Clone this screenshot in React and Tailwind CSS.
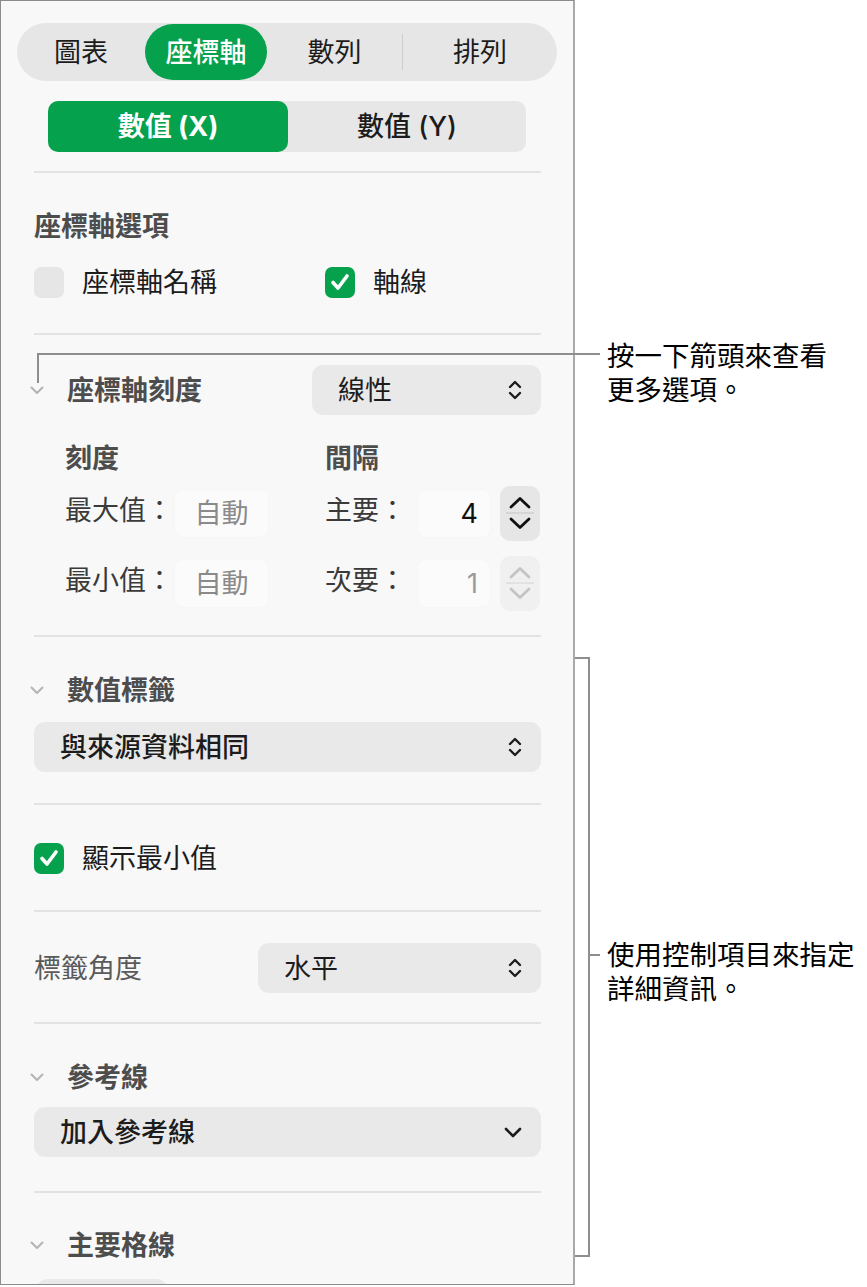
import React from "react";

const UpDown = ({ className = "" }) => (
  <svg width="14" height="22" viewBox="0 0 14 22" fill="none" stroke="currentColor" strokeWidth="2.4" strokeLinecap="round" strokeLinejoin="round" className={className}>
    <path d="M2 8 L7 3 L12 8" />
    <path d="M2 14 L7 19 L12 14" />
  </svg>
);

const ChevronDown = ({ className = "" }) => (
  <svg width="18" height="11" viewBox="0 0 18 11" fill="none" stroke="currentColor" strokeWidth="2.6" strokeLinecap="round" strokeLinejoin="round" className={className}>
    <path d="M2 2 L9 9 L16 2" />
  </svg>
);

const Disclosure = () => (
  <svg width="14" height="9" viewBox="0 0 14 9" fill="none" stroke="#b4b4b4" strokeWidth="2" strokeLinecap="round" strokeLinejoin="round" className="-ml-[4px] shrink-0">
    <path d="M1.5 1.5 L7 7 L12.5 1.5" />
  </svg>
);

const Checkbox = ({ checked }) =>
  checked ? (
    <div className="w-[30px] h-[31px] rounded-[7px] bg-[#06a14c] flex items-center justify-center shrink-0">
      <svg width="20" height="18" viewBox="0 0 20 18" fill="none" stroke="white" strokeWidth="3.6" strokeLinecap="round" strokeLinejoin="round">
        <path d="M3 9.5 L8 15 L17 3" />
      </svg>
    </div>
  ) : (
    <div className="w-[30px] h-[31px] rounded-[7px] bg-[#e6e6e6] shrink-0" />
  );

const Select = ({ label, width, down, bold }) => (
  <div className={`${width} h-[50px] rounded-[11px] bg-[#e9e9e9] flex items-center justify-between pl-[26px] pr-[19px]`}>
    <span className={`text-[27px] text-[#1c1c1c] ${bold ? "font-medium" : ""}`}>{label}</span>
    {down ? <ChevronDown className="text-[#1c1c1c]" /> : <UpDown className="text-[#1c1c1c]" />}
  </div>
);

const Stepper = ({ disabled }) => (
  <div className={`w-[40px] h-[55px] rounded-[10px] flex flex-col items-center justify-center ${disabled ? "bg-[#f0f0f0] text-[#c4c4c4]" : "bg-[#e6e6e6] text-[#111]"}`}>
    <svg width="24" height="13" viewBox="0 0 24 13" fill="none" stroke="currentColor" strokeWidth="2.8" strokeLinecap="round" strokeLinejoin="round">
      <path d="M3 11 L12 2.5 L21 11" />
    </svg>
    <div className={`w-[28px] h-[2px] my-[3px] ${disabled ? "bg-[#e2e2e2]" : "bg-[#d6d6d6]"}`} />
    <svg width="24" height="13" viewBox="0 0 24 13" fill="none" stroke="currentColor" strokeWidth="2.8" strokeLinecap="round" strokeLinejoin="round">
      <path d="M3 2 L12 10.5 L21 2" />
    </svg>
  </div>
);

const Sep = ({ mt }) => <div className={`${mt} h-[2px] bg-[#e3e3e3] shrink-0`} />;

const SectionHead = ({ label, mt }) => (
  <div className={`${mt} h-[32px] flex items-center shrink-0`}>
    <Disclosure />
    <span className="ml-[23px] text-[27px] font-bold text-[#4d4d4d]">{label}</span>
  </div>
);

const Field = ({ children, tone, align }) => (
  <div className={`h-[47px] rounded-[8px] bg-[#fbfbfb] shadow-[0_0_2px_rgba(0,0,0,0.035)] flex items-center ${align} ${tone}`}>{children}</div>
);

export default function App() {
  return (
    <div className="relative w-[867px] h-[1287px] bg-white flex [font-family:Inter,'Noto_Sans_CJK_TC',sans-serif] leading-none">
      {/* inspector panel */}
      <div className="w-[575px] h-[1285px] shrink-0 border-l border-t border-b border-[#8c8c8c] border-r-2 border-r-[#a9a9a9] bg-[#f8f8f8] overflow-hidden flex flex-col">
        {/* tabs */}
        <div className="mt-[22px] ml-[16px] w-[540px] h-[58px] rounded-full bg-[#e6e6e6] flex items-center shrink-0 text-[27px] text-[#1c1c1c]">
          <div className="w-[128px] text-center">圖表</div>
          <div className="w-[122px] h-[56px] rounded-full bg-[#06a14c] text-white font-medium flex items-center justify-center">座標軸</div>
          <div className="w-[135px] text-center">數列</div>
          <div className="w-px h-[36px] bg-[#cdcdcd]" />
          <div className="flex-1 text-center">排列</div>
        </div>

        {/* axis switch */}
        <div className="mt-[20px] ml-[47px] w-[478px] h-[51px] rounded-[10px] bg-[#e7e7e7] flex shrink-0 text-[27px]">
          <div className="w-[240px] rounded-[10px] bg-[#06a14c] text-white font-bold flex items-center justify-center">數值 (X)</div>
          <div className="flex-1 text-[#1c1c1c] font-medium flex items-center justify-center">數值 (Y)</div>
        </div>

        <div className="flex flex-col pl-[33px] pr-[32px]">
          <Sep mt="mt-[19px]" />

          <div className="mt-[37px] h-[32px] flex items-center text-[27px] font-bold text-[#4d4d4d]">座標軸選項</div>

          <div className="mt-[24px] h-[32px] flex items-center text-[27px] text-[#1c1c1c]">
            <Checkbox />
            <span className="ml-[18px] w-[243px]">座標軸名稱</span>
            <Checkbox checked />
            <span className="ml-[18px]">軸線</span>
          </div>

          <Sep mt="mt-[35px]" />

          <div className="mt-[30px] h-[50px] flex items-center">
            <Disclosure />
            <span className="ml-[23px] text-[27px] font-bold text-[#4d4d4d]">座標軸刻度</span>
            <div className="ml-auto">
              <Select label="線性" width="w-[229px]" />
            </div>
          </div>

          {/* scale grid */}
          <div className="pl-[31px] flex flex-col text-[27px]">
            <div className="mt-[27px] h-[32px] flex items-center font-bold text-[#4d4d4d]">
              <span className="w-[260px]">刻度</span>
              <span>間隔</span>
            </div>

            <div className="mt-[11px] h-[56px] flex items-center">
              <span className="w-[110px] text-[#3a3a3a] -mt-[6px]">最大值：</span>
              <div className="w-[93px]">
                <Field tone="text-[#8a8a8a]" align="justify-center">自動</Field>
              </div>
              <span className="ml-[57px] w-[93px] text-[#3a3a3a] -mt-[6px]">主要：</span>
              <div className="w-[72px]">
                <Field tone="text-[#111]" align="justify-end pr-[12px]">4</Field>
              </div>
              <div className="ml-[10px]">
                <Stepper />
              </div>
            </div>

            <div className="mt-[14px] h-[56px] flex items-center">
              <span className="w-[110px] text-[#3a3a3a] -mt-[6px]">最小值：</span>
              <div className="w-[93px]">
                <Field tone="text-[#8a8a8a]" align="justify-center">自動</Field>
              </div>
              <span className="ml-[57px] w-[93px] text-[#3a3a3a] -mt-[6px]">次要：</span>
              <div className="w-[72px]">
                <Field tone="text-[#9a9a9a]" align="justify-end pr-[12px]">1</Field>
              </div>
              <div className="ml-[10px]">
                <Stepper disabled />
              </div>
            </div>
          </div>

          <Sep mt="mt-[24px]" />

          <SectionHead label="數值標籤" mt="mt-[37px]" />
          <div className="mt-[16px]">
            <Select label="與來源資料相同" width="w-full" bold />
          </div>

          <Sep mt="mt-[31px]" />

          <div className="mt-[37px] h-[32px] flex items-center text-[27px] text-[#1c1c1c]">
            <Checkbox checked />
            <span className="ml-[18px]">顯示最小值</span>
          </div>

          <Sep mt="mt-[36px]" />

          <div className="mt-[31px] h-[50px] flex items-center">
            <span className="text-[27px] text-[#5a5a5a]">標籤角度</span>
            <div className="ml-auto">
              <Select label="水平" width="w-[283px]" />
            </div>
          </div>

          <Sep mt="mt-[29px]" />

          <SectionHead label="參考線" mt="mt-[37px]" />
          <div className="mt-[14px]">
            <Select label="加入參考線" width="w-full" bold down />
          </div>

          <Sep mt="mt-[34px]" />

          <SectionHead label="主要格線" mt="mt-[36px]" />
          <div className="mt-[18px] ml-[3px] w-[130px] h-[40px] rounded-[10px] bg-[#e9e9e9] shrink-0" />
        </div>
      </div>

      {/* callout: disclosure arrow */}
      <div className="absolute left-[37px] top-[353px] w-[563px] h-[2px] bg-[#8e8e8e]" />
      <div className="absolute left-[37px] top-[353px] w-[2px] h-[30px] bg-[#8e8e8e]" />
      <div className="absolute left-[607px] top-[339px] text-[27.5px] leading-[34px] text-black">
        按一下箭頭來查看
        <br />
        更多選項。
      </div>

      {/* callout: bracket */}
      <div className="absolute left-[588px] top-[657px] w-[2px] h-[600px] bg-[#8e8e8e]" />
      <div className="absolute left-[575px] top-[657px] w-[15px] h-[2px] bg-[#8e8e8e]" />
      <div className="absolute left-[575px] top-[1255px] w-[15px] h-[2px] bg-[#8e8e8e]" />
      <div className="absolute left-[588px] top-[954px] w-[12px] h-[2px] bg-[#8e8e8e]" />
      <div className="absolute left-[607px] top-[938px] text-[27.5px] leading-[34px] text-black">
        使用控制項目來指定
        <br />
        詳細資訊。
      </div>
    </div>
  );
}
